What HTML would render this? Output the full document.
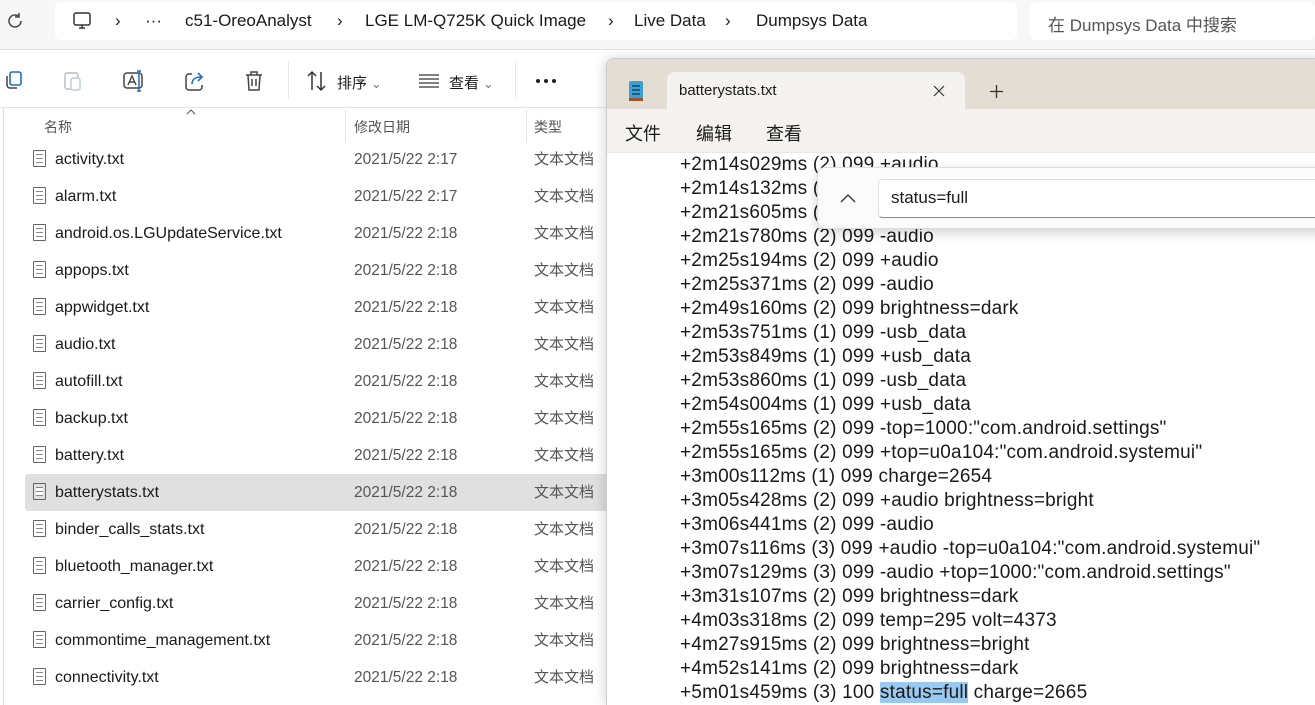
<!DOCTYPE html>
<html><head><meta charset="utf-8"><style>
*{margin:0;padding:0;box-sizing:border-box}
html{overflow:hidden;height:705px}
body{width:1315px;height:705px;overflow:hidden;background:#fff;font-family:"Liberation Sans","Noto Sans CJK SC",sans-serif;position:relative;color:#1a1a1a}
.top{position:absolute;left:0;top:0;width:1315px;height:50px;background:#f7f7f7;border-bottom:1px solid #e0e0e0}
.addr{position:absolute;left:55px;top:2px;width:962px;height:38px;background:#fff;border-radius:6px}
.addr span{position:absolute;top:9px;font-size:17px}
.search{position:absolute;left:1030px;top:2px;width:285px;height:38px;background:#fff;border-radius:6px;font-size:17px;color:#555;padding:9px 18px}
.tb{position:absolute;left:0;top:51px;width:620px;height:57px;background:#fff;border-bottom:1px solid #e5e5e5}
.tb span{position:absolute;font-size:15px;top:20px}
.tb svg{position:absolute;top:19px}
.hdr{position:absolute;top:108px;height:34px;font-size:14px;color:#555}
.row{position:absolute;left:25px;width:600px;height:37px;font-size:16px;line-height:37px}
.row span{position:absolute;top:0}
.row .n{left:30px}
.row .d{left:329px;color:#555;font-size:15.5px}
.row .t{left:509px;color:#555;font-size:15px}
.row .ic{position:absolute;left:8px;top:9px;width:13px;height:17px;border:1px solid #666;border-radius:1px;background:repeating-linear-gradient(#fff 0 3px,#888 3px 4px);background-clip:content-box;padding:3px 2px}
.np{position:absolute;left:606px;top:58px;width:720px;height:647px;background:#fff;border:1px solid #ccc;border-bottom:none;border-radius:8px 0 0 0;box-shadow:-2px 0 12px rgba(0,0,0,.15);overflow:hidden}
.tabs{height:50px;background:#e4ddd3}
.tab{position:absolute;left:60px;top:13px;width:298px;height:38px;background:#f5f3f0;border-radius:8px 8px 0 0;font-size:15px;padding:10px 12px}
.menu{position:absolute;top:50px;left:0;width:100%;height:44px;background:#f5f3f0;border-bottom:1px solid #e8e8e8;font-size:18px}
.menu span{position:absolute;top:11px}
.txt{position:absolute;left:73px;top:94px;font-size:19px;line-height:24px;white-space:pre;letter-spacing:0.2px}
.find{position:absolute;left:210px;top:108px;width:520px;height:62px;background:#fbfbfb;border:1px solid #ddd;border-radius:8px;box-shadow:0 4px 12px rgba(0,0,0,.18)}
.find .in{position:absolute;left:60px;top:11px;width:470px;height:39px;background:#fff;border:1px solid #e0e0e0;border-bottom:1px solid #888;border-radius:4px;font-size:17px;padding:8px 12px}
</style></head><body>
<div class="top">
<svg style="position:absolute;left:5px;top:11px" width="20" height="20" viewBox="0 0 20 20"><path d="M16 10a6 6 0 1 1-2-4.5M14 2v4h-4" fill="none" stroke="#444" stroke-width="1.5"/></svg>
<div class="addr">
<svg style="position:absolute;left:17px;top:9px" width="20" height="20" viewBox="0 0 20 20"><rect x="2" y="2" width="16" height="12" rx="2" fill="none" stroke="#333" stroke-width="1.5"/><path d="M7 17h6M10 14v3" stroke="#333" stroke-width="1.5"/></svg>
<span style="left:60px">›</span><span style="left:90px">···</span><span style="left:130px">c51-OreoAnalyst</span><span style="left:282px">›</span><span style="left:310px">LGE LM-Q725K Quick Image</span><span style="left:553px">›</span><span style="left:579px">Live Data</span><span style="left:670px">›</span><span style="left:701px">Dumpsys Data</span>
</div>
<div class="search">在 Dumpsys Data 中搜索</div>
</div>
<div class="tb">
<svg style="left:4px" width="20" height="20" viewBox="0 0 20 20"><rect x="6" y="2" width="11" height="13" rx="2" fill="none" stroke="#1e6fc4" stroke-width="1.6"/><path d="M3 6v9a3 3 0 0 0 3 3h7" fill="none" stroke="#444" stroke-width="1.5"/></svg>
<svg style="left:63px" width="20" height="22" viewBox="0 0 20 22"><rect x="2" y="3" width="13" height="16" rx="2" fill="none" stroke="#bbb" stroke-width="1.4"/><rect x="8" y="8" width="9" height="12" rx="2" fill="#fff" stroke="#b8cde0" stroke-width="1.4"/></svg>
<svg style="left:122px" width="24" height="22" viewBox="0 0 24 22"><rect x="2" y="3" width="18" height="15" rx="3" fill="none" stroke="#444" stroke-width="1.5"/><path d="M6 15l4-9 4 9M7.5 12h5" fill="none" stroke="#444" stroke-width="1.4"/><path d="M17 1v20M15 1h4M15 21h4" stroke="#1e6fc4" stroke-width="1.5"/></svg>
<svg style="left:184px" width="22" height="22" viewBox="0 0 22 22"><path d="M8 4H5a3 3 0 0 0-3 3v10a3 3 0 0 0 3 3h10a3 3 0 0 0 3-3v-2" fill="none" stroke="#444" stroke-width="1.5"/><path d="M8 14c0-5 4-7 9-7M14 3l4 4-4 4" fill="none" stroke="#1e6fc4" stroke-width="1.6"/></svg>
<svg style="left:244px" width="20" height="22" viewBox="0 0 20 22"><path d="M2 5h16M7 5V2h6v3M4 5l1 15h10l1-15M8 9v7M12 9v7" fill="none" stroke="#444" stroke-width="1.5"/></svg>
<div style="position:absolute;left:288px;top:10px;width:1px;height:38px;background:#e5e5e5"></div>
<svg style="left:306px" width="22" height="22" viewBox="0 0 22 22"><path d="M6 20V2M2 6l4-4 4 4M15 2v18M11 16l4 4 4-4" fill="none" stroke="#333" stroke-width="1.5"/></svg>
<span style="left:337px;top:21px">排序 <small style="color:#777">⌄</small></span>
<svg style="left:418px" width="22" height="22" viewBox="0 0 22 22"><path d="M1 5h20M1 9h20M1 13h20M1 17h20" stroke="#333" stroke-width="1.3"/></svg>
<span style="left:449px;top:21px">查看 <small style="color:#777">⌄</small></span>
<div style="position:absolute;left:515px;top:10px;width:1px;height:38px;background:#e5e5e5"></div>
<svg style="left:535px;top:27px" width="24" height="6" viewBox="0 0 24 6"><circle cx="3" cy="3" r="2" fill="#222"/><circle cx="11" cy="3" r="2" fill="#222"/><circle cx="19" cy="3" r="2" fill="#222"/></svg>
</div>
<div class="hdr" style="left:44px;top:117px">名称</div>
<svg style="position:absolute;left:186px;top:109px" width="10" height="6" viewBox="0 0 10 6"><path d="M1 5l4-4 4 4" fill="none" stroke="#555" stroke-width="1"/></svg>
<div style="position:absolute;left:345px;top:110px;width:1px;height:32px;background:#e5e5e5"></div>
<div class="hdr" style="left:354px;top:117px">修改日期</div>
<div style="position:absolute;left:526px;top:110px;width:1px;height:32px;background:#e5e5e5"></div>
<div class="hdr" style="left:534px;top:117px">类型</div>
<div style="position:absolute;left:0;top:108px;width:4px;height:600px;border-right:1px solid #ddd"></div>
<div class="row" style="top:141px"><i class="ic"></i><span class="n">activity.txt</span><span class="d">2021/5/22 2:17</span><span class="t">文本文档</span></div>
<div class="row" style="top:178px"><i class="ic"></i><span class="n">alarm.txt</span><span class="d">2021/5/22 2:17</span><span class="t">文本文档</span></div>
<div class="row" style="top:215px"><i class="ic"></i><span class="n">android.os.LGUpdateService.txt</span><span class="d">2021/5/22 2:18</span><span class="t">文本文档</span></div>
<div class="row" style="top:252px"><i class="ic"></i><span class="n">appops.txt</span><span class="d">2021/5/22 2:18</span><span class="t">文本文档</span></div>
<div class="row" style="top:289px"><i class="ic"></i><span class="n">appwidget.txt</span><span class="d">2021/5/22 2:18</span><span class="t">文本文档</span></div>
<div class="row" style="top:326px"><i class="ic"></i><span class="n">audio.txt</span><span class="d">2021/5/22 2:18</span><span class="t">文本文档</span></div>
<div class="row" style="top:363px"><i class="ic"></i><span class="n">autofill.txt</span><span class="d">2021/5/22 2:18</span><span class="t">文本文档</span></div>
<div class="row" style="top:400px"><i class="ic"></i><span class="n">backup.txt</span><span class="d">2021/5/22 2:18</span><span class="t">文本文档</span></div>
<div class="row" style="top:437px"><i class="ic"></i><span class="n">battery.txt</span><span class="d">2021/5/22 2:18</span><span class="t">文本文档</span></div>
<div class="row" style="top:474px;background:#e0e0e0;border-radius:3px"><i class="ic"></i><span class="n">batterystats.txt</span><span class="d">2021/5/22 2:18</span><span class="t">文本文档</span></div>
<div class="row" style="top:511px"><i class="ic"></i><span class="n">binder_calls_stats.txt</span><span class="d">2021/5/22 2:18</span><span class="t">文本文档</span></div>
<div class="row" style="top:548px"><i class="ic"></i><span class="n">bluetooth_manager.txt</span><span class="d">2021/5/22 2:18</span><span class="t">文本文档</span></div>
<div class="row" style="top:585px"><i class="ic"></i><span class="n">carrier_config.txt</span><span class="d">2021/5/22 2:18</span><span class="t">文本文档</span></div>
<div class="row" style="top:622px"><i class="ic"></i><span class="n">commontime_management.txt</span><span class="d">2021/5/22 2:18</span><span class="t">文本文档</span></div>
<div class="row" style="top:659px"><i class="ic"></i><span class="n">connectivity.txt</span><span class="d">2021/5/22 2:18</span><span class="t">文本文档</span></div>
<div class="row" style="top:696px"><i class="ic"></i></div>
<div class="np">
<div class="tabs"></div>
<svg style="position:absolute;left:22px;top:20px" width="14" height="22" viewBox="0 0 14 22"><rect x="0" y="2" width="14" height="18" rx="2" fill="#3aa0d8"/><path d="M3 7h8M3 11h8M3 15h8" stroke="#134" stroke-width="1.3"/><rect x="0" y="19" width="14" height="3" fill="#a0522d"/></svg>
<div class="tab">batterystats.txt<svg style="position:absolute;right:20px;top:13px" width="12" height="12" viewBox="0 0 12 12"><path d="M1 1l10 10M11 1L1 11" stroke="#333" stroke-width="1.2"/></svg></div>
<svg style="position:absolute;left:383px;top:26px" width="13" height="13" viewBox="0 0 13 13"><path d="M6.5 0v13M0 6.5h13" stroke="#333" stroke-width="1.3"/></svg>
<div class="menu"><span style="left:18px">文件</span><span style="left:89px">编辑</span><span style="left:159px">查看</span></div>
<div class="txt">+2m14s029ms (2) 099 +audio
+2m14s132ms (2) 099 -audio
+2m21s605ms (2) 099 +audio
+2m21s780ms (2) 099 -audio
+2m25s194ms (2) 099 +audio
+2m25s371ms (2) 099 -audio
+2m49s160ms (2) 099 brightness=dark
+2m53s751ms (1) 099 -usb_data
+2m53s849ms (1) 099 +usb_data
+2m53s860ms (1) 099 -usb_data
+2m54s004ms (1) 099 +usb_data
+2m55s165ms (2) 099 -top=1000:"com.android.settings"
+2m55s165ms (2) 099 +top=u0a104:"com.android.systemui"
+3m00s112ms (1) 099 charge=2654
+3m05s428ms (2) 099 +audio brightness=bright
+3m06s441ms (2) 099 -audio
+3m07s116ms (3) 099 +audio -top=u0a104:"com.android.systemui"
+3m07s129ms (3) 099 -audio +top=1000:"com.android.settings"
+3m31s107ms (2) 099 brightness=dark
+4m03s318ms (2) 099 temp=295 volt=4373
+4m27s915ms (2) 099 brightness=bright
+4m52s141ms (2) 099 brightness=dark
+5m01s459ms (3) 100 <span style="background:#99c9ef">status=full</span> charge=2665</div>
<div class="find"><svg style="position:absolute;left:22px;top:26px" width="16" height="9" viewBox="0 0 16 9"><path d="M1 8l7-7 7 7" fill="none" stroke="#333" stroke-width="1.3"/></svg><div class="in">status=full</div></div>
</div>
</body></html>
